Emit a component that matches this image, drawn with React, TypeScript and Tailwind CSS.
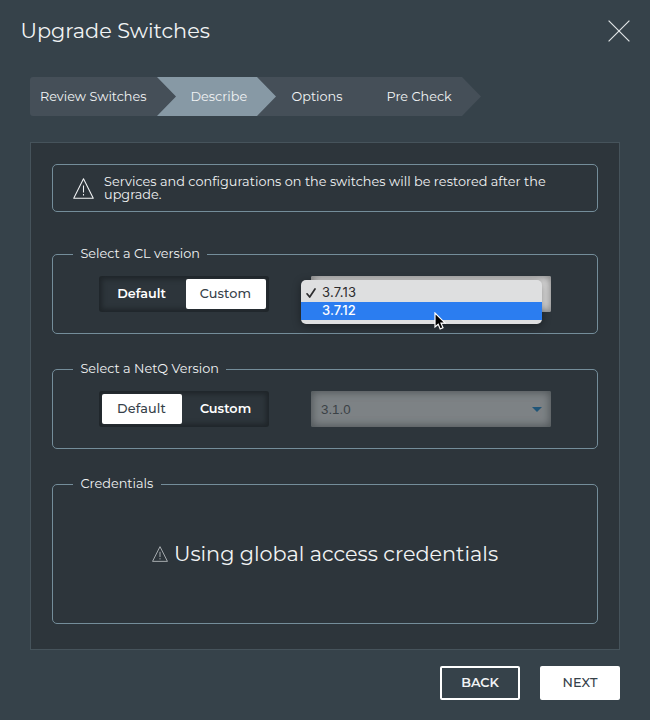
import type { ReactNode } from "react";

function Warning({ className }: { className: string }) {
  return (
    <svg viewBox="0 0 20 20" className={className} fill="none" stroke="currentColor" strokeLinejoin="round">
      <path d="M10 .8 19.3 19.2H.7Z" />
      <path d="M10 7.2v6.6M10 15.2v1.5" />
    </svg>
  );
}

function Section({ title, className, children }: { title: string; className: string; children: ReactNode }) {
  return (
    <fieldset className={`w-[546px] rounded-[5px] border border-[#748d9a] pl-5 ${className}`}>
      <legend className="h-[19px] px-[7.5px] text-[12.8px] leading-[17px] whitespace-nowrap">{title}</legend>
      {children}
    </fieldset>
  );
}

function Toggle({ value }: { value: "Default" | "Custom" }) {
  const on = "bg-white text-[#364149] font-medium tracking-[0.15px]";
  const off = "text-white font-semibold";
  return (
    <div className="flex h-9 w-[170px] shrink-0 rounded-[3px] bg-[#2d353b] p-[3px] text-[12.8px] shadow-[inset_0_0_5px_3px_#1f2529]">
      <button className={`h-[30px] w-20 rounded-[2px] pr-px ${value === "Default" ? on : off}`}>Default</button>
      <button className={`ml-1 h-[30px] w-20 rounded-[2px] pr-px ${value === "Custom" ? on : off}`}>Custom</button>
    </div>
  );
}

export default function App() {
  return (
    <div className="h-[720px] w-[650px] overflow-hidden bg-[#36424a] font-['Montserrat','Inter',sans-serif] text-[#f1f3f4]">
      <header className="flex h-[77px] items-start justify-between pl-[20.5px] pr-5 pt-[15px]">
        <h1 className="text-[20.8px] leading-8 whitespace-nowrap">Upgrade Switches</h1>
        <svg viewBox="0 0 22 22" className="mt-[5px] h-[22px] w-[22px]" stroke="#e1e4e6" strokeWidth="1.2">
          <path d="M.6.6 21.4 21.4M21.4.6.6 21.4" />
        </svg>
      </header>

      <nav className="ml-[30px] flex h-[39px] w-[451px] overflow-hidden rounded-l-[3px] bg-[#454f58] text-[12.8px] leading-[39px] whitespace-nowrap [clip-path:polygon(0_0,432px_0,451px_50%,432px_100%,0_100%)]">
        <div className="w-[127px] pl-[10px]">Review Switches</div>
        <div className="w-[119px] bg-[#8799a5] pl-[33.5px] [clip-path:polygon(0_0,100px_0,119px_50%,100px_100%,0_100%,19px_50%)]">Describe</div>
        <div className="w-[95px] pl-[15.5px]">Options</div>
        <div className="pl-[15.5px]">Pre Check</div>
      </nav>

      <main className="ml-[30px] mt-[26px] flex h-[508px] w-[590px] flex-col border border-[#46535b] bg-[#2d353b] pl-[21px] pt-[21px]">
        <div className="flex h-12 w-[546px] shrink-0 items-center rounded-[5px] border border-[#748d9a] pl-5">
          <Warning className="h-[21px] w-[21px] shrink-0" />
          <p className="ml-[10px] text-[12.8px] leading-[13px] tracking-[0.03px] whitespace-nowrap">
            Services and configurations on the switches will be restored after the
            <br />
            upgrade.
          </p>
        </div>

        <Section title="Select a CL version" className="mt-[33px] h-[89px] shrink-0">
          <div className="flex pl-[26px] pt-[12px]">
            <Toggle value="Custom" />
            <div className="relative ml-[42px] h-9 w-60 rounded-[2px] bg-[#e4e4e4] shadow-[inset_0_0_8px_1px_#777]">
              <div className="absolute -left-[10px] top-1 h-11 w-[241px] rounded-[5px] bg-[#dedfe0] pt-[4px] font-['Inter',sans-serif] text-[13px] text-[#2c2c2e] shadow-[0_2px_8px_rgba(0,0,0,0.4)]">
                <div className="flex h-[18px] items-center">
                  <svg viewBox="0 0 10 10" className="ml-[5px] mr-[6px] h-[10px] w-[10px]" fill="none" stroke="currentColor" strokeWidth="1.7" strokeLinecap="round" strokeLinejoin="round">
                    <path d="M1 5.8 3.7 9 9 1" />
                  </svg>
                  <span className="tracking-[0.2px]">3.7.13</span>
                </div>
                <div className="h-[18px] bg-[#2b7df0] pl-[21px] leading-[17px] font-medium tracking-[0.05px] text-white">3.7.12</div>
                <svg viewBox="0 0 12 18" className="absolute left-[133px] top-[32px] h-[18px] w-3" fill="#000" stroke="#fff" strokeWidth="1.2">
                  <path d="M1 1v14l3.2-2.8 2 4.7 2.8-1.2-2-4.5h4.2Z" />
                </svg>
              </div>
            </div>
          </div>
        </Section>

        <Section title="Select a NetQ Version" className="mt-[26px] h-[89px] shrink-0">
          <div className="flex pl-[26px] pt-[12px]">
            <Toggle value="Default" />
            <div className="ml-[42px] flex h-9 w-60 items-center justify-between rounded-[2px] bg-[#7d8285] pl-[10px] pr-[9px] font-['Liberation_Sans',sans-serif] text-[13.3px] text-[#3b4145] shadow-[inset_0_0_8px_1px_#4c5255]">
              <span className="pt-[2px]">3.1.0</span>
              <svg viewBox="0 0 10 5" className="h-[5px] w-[10px]" fill="#1f5578">
                <path d="M0 0h10L5 5Z" />
              </svg>
            </div>
          </div>
        </Section>

        <Section title="Credentials" className="mt-[26px] h-[149px] shrink-0">
          <div className="flex h-[120px] items-center pl-[79px] text-[20.8px] whitespace-nowrap">
            <Warning className="h-4 w-4 shrink-0 text-[#c4c9cc]" />
            <span className="ml-[6px] tracking-[-0.03px]">Using global access credentials</span>
          </div>
        </Section>
      </main>

      <footer className="mt-4 flex justify-end gap-5 pr-[30px] text-[12.8px] font-semibold">
        <button className="h-[34px] w-20 rounded-[2px] border-2 border-white">BACK</button>
        <button className="h-[34px] w-20 rounded-[2px] bg-white font-medium tracking-[0.1px] text-[#364149]">NEXT</button>
      </footer>
    </div>
  );
}
